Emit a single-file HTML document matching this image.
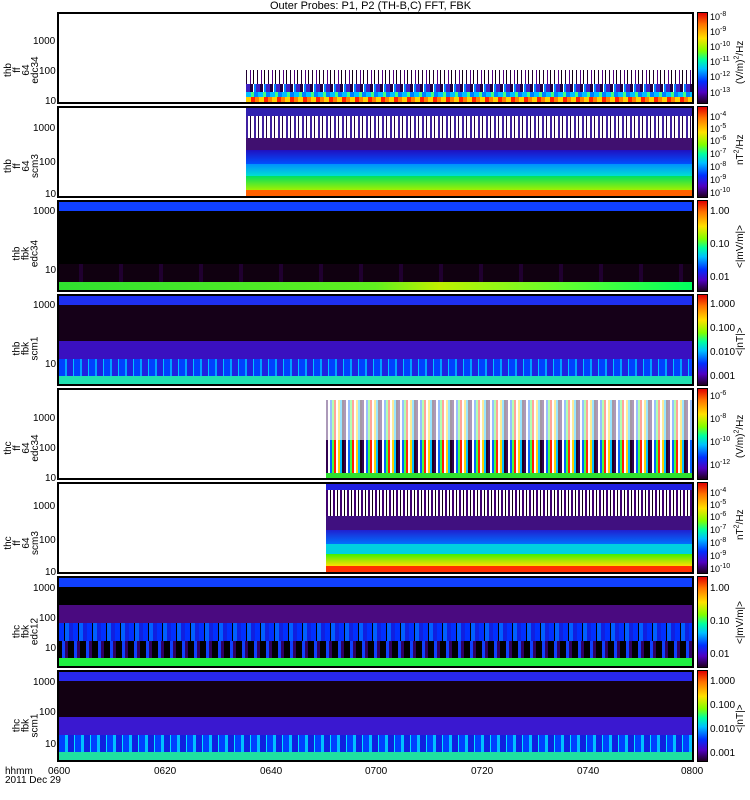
<!DOCTYPE html><html><head><style>
body{margin:0;width:750px;height:800px;background:#fff;position:relative;overflow:hidden;font-family:"Liberation Sans",sans-serif;}
.p{position:absolute;left:57px;width:633px;border:2px solid #000;box-sizing:content-box;overflow:hidden;background:#fff}
.d{position:absolute;top:0;bottom:0;right:0}
.s{position:absolute;left:0;right:0}
.cb{position:absolute;left:697px;width:9px;border:1px solid #000;background:linear-gradient(#e00000,#ff7000 12%,#ffe000 28%,#80ff00 42%,#00ffa0 52%,#00c0ff 62%,#0030ff 76%,#5000c0 88%,#200020)}
.t{position:absolute;font-size:10px;line-height:10px;color:#000;white-space:nowrap}
.e{position:absolute;font-size:9px;line-height:9px;white-space:nowrap;left:710px}
.e sup{font-size:7px;line-height:0;vertical-align:4px}
.yl{position:absolute;font-size:10px;line-height:9px;text-align:center;transform:rotate(-90deg);transform-origin:center;width:60px}
.v{position:absolute;font-size:10px;white-space:nowrap;transform:rotate(-90deg);transform-origin:left top}
.v sup{font-size:7px;line-height:0}
</style></head><body>
<div class="t" style="left:270px;top:1px;font-size:11px">Outer Probes: P1, P2 (TH-B,C) FFT, FBK</div>

<!-- P1 -->
<div class="p" style="top:12px;height:88px">
 <div class="d" style="left:187px">
  <div class="s" style="top:56px;height:20px;background:repeating-linear-gradient(90deg,#200030 0 1px,#fff 1px 4px,#500080 4px 5px,#fff 5px 7px,#100010 7px 8px,#fff 8px 11px)"></div>
  <div class="s" style="top:70px;height:8px;background:repeating-linear-gradient(90deg,#4020c0 0 4px,#200040 4px 7px,#fff 7px 8px,#0080ff 8px 10px)"></div>
  <div class="s" style="top:78px;height:5px;background:repeating-linear-gradient(90deg,#00c0ff 0 5px,#40ff80 5px 8px,#0080ff 8px 12px)"></div>
  <div class="s" style="top:83px;height:5px;background:repeating-linear-gradient(90deg,#ffd000 0 5px,#ff2000 5px 9px,#ff8000 9px 13px)"></div>
 </div>
</div>
<!-- P2 -->
<div class="p" style="top:106px;height:88px">
 <div class="d" style="left:187px">
  <div class="s" style="top:0;height:8px;background:#3020b0"></div>
  <div class="s" style="top:8px;height:22px;background:repeating-linear-gradient(90deg,#4020a0 0 2px,#fff 2px 4px,#200040 4px 5px,#fff 5px 6px,#fff 6px 8px)"></div>
  <div class="s" style="top:30px;height:12px;background:#401070"></div>
  <div class="s" style="top:42px;height:14px;background:linear-gradient(#2010c0,#0050ff)"></div>
  <div class="s" style="top:56px;height:12px;background:linear-gradient(#0090ff,#00e0d0)"></div>
  <div class="s" style="top:68px;height:14px;background:linear-gradient(#00e060,#a0f000)"></div>
  <div class="s" style="top:82px;height:6px;background:#ff6000"></div>
 </div>
</div>
<!-- P3 -->
<div class="p" style="top:200px;height:88px;background:#000">
 <div class="s" style="top:0;height:9px;background:#1040ff"></div>
 <div class="s" style="top:62px;height:18px;background:repeating-linear-gradient(90deg,#100010 0 20px,#200030 20px 24px,#100010 24px 40px)"></div>
 <div class="s" style="top:80px;height:8px;background:linear-gradient(90deg,#30e030,#60f020 50%,#c0f000 60%,#60ff30 80%,#00ff60)"></div>
</div>
<!-- P4 -->
<div class="p" style="top:294px;height:88px;background:#150018">
 <div class="s" style="top:0;height:9px;background:#1e30f0"></div>
 <div class="s" style="top:45px;height:18px;background:#3a10c0"></div>
 <div class="s" style="top:63px;height:17px;background:repeating-linear-gradient(90deg,#0040ff 0 6px,#00a0ff 6px 8px,#2020e0 8px 14px,#00c0ff 14px 15px)"></div>
 <div class="s" style="top:80px;height:8px;background:#20e0b0"></div>
</div>
<!-- P5 -->
<div class="p" style="top:388px;height:88px">
 <div class="d" style="left:267px;top:10px;background:repeating-linear-gradient(90deg,#300050 0 2px,#fff 2px 4px,#0060ff 4px 6px,#40ff40 6px 8px,#ff2000 8px 10px,#fff 10px 12px,#ffd000 12px 14px,#00c0ff 14px 16px,#200020 16px 18px)"></div>
 <div class="d" style="left:267px;top:10px;height:40px;background:rgba(255,255,255,.6)"></div>
 <div class="d" style="left:267px;top:83px;background:#30e030"></div>
</div>
<!-- P6 -->
<div class="p" style="top:482px;height:88px">
 <div class="d" style="left:267px">
  <div class="s" style="top:0;height:6px;background:#2020e0"></div>
  <div class="s" style="top:6px;height:26px;background:repeating-linear-gradient(90deg,#400070 0 2px,#fff 2px 4px,#100010 4px 5px,#fff 5px 7px)"></div>
  <div class="s" style="top:32px;height:14px;background:#401080"></div>
  <div class="s" style="top:46px;height:14px;background:linear-gradient(#2020d0,#0070ff)"></div>
  <div class="s" style="top:60px;height:10px;background:#00d0e0"></div>
  <div class="s" style="top:70px;height:12px;background:linear-gradient(#40f000,#ffe000)"></div>
  <div class="s" style="top:82px;height:6px;background:#ff3000"></div>
 </div>
</div>
<!-- P7 -->
<div class="p" style="top:576px;height:88px;background:#000">
 <div class="s" style="top:0;height:9px;background:#1040ff"></div>
 <div class="s" style="top:27px;height:18px;background:#4a0a80"></div>
 <div class="s" style="top:45px;height:18px;background:repeating-linear-gradient(90deg,#0030ff 0 5px,#000 5px 6px,#0060ff 6px 10px,#1020e0 10px 14px)"></div>
 <div class="s" style="top:63px;height:17px;background:repeating-linear-gradient(90deg,#000 0 3px,#1040ff 3px 6px,#300060 6px 9px,#000 9px 12px)"></div>
 <div class="s" style="top:80px;height:8px;background:#20f040"></div>
</div>
<!-- P8 -->
<div class="p" style="top:670px;height:88px;background:#120012">
 <div class="s" style="top:0;height:9px;background:#2828ee"></div>
 <div class="s" style="top:45px;height:18px;background:#3a18d0"></div>
 <div class="s" style="top:63px;height:17px;background:repeating-linear-gradient(90deg,#0040ff 0 6px,#00c0ff 6px 9px,#1020e0 9px 15px,#00e0ff 15px 16px)"></div>
 <div class="s" style="top:80px;height:8px;background:#20e0a0"></div>
</div>

<!-- colorbars -->
<div class="cb" style="top:12px;height:90px"></div>
<div class="cb" style="top:106px;height:90px"></div>
<div class="cb" style="top:200px;height:90px"></div>
<div class="cb" style="top:294px;height:90px"></div>
<div class="cb" style="top:388px;height:90px"></div>
<div class="cb" style="top:482px;height:90px"></div>
<div class="cb" style="top:576px;height:90px"></div>
<div class="cb" style="top:670px;height:90px"></div>

<!-- colorbar labels -->
<div class="e" style="top:13px">10<sup>-8</sup></div><div class="e" style="top:28px">10<sup>-9</sup></div><div class="e" style="top:43px">10<sup>-10</sup></div><div class="e" style="top:58px">10<sup>-11</sup></div><div class="e" style="top:73px">10<sup>-12</sup></div><div class="e" style="top:89px">10<sup>-13</sup></div>
<div class="e" style="top:113px">10<sup>-4</sup></div><div class="e" style="top:125px">10<sup>-5</sup></div><div class="e" style="top:137px">10<sup>-6</sup></div><div class="e" style="top:150px">10<sup>-7</sup></div><div class="e" style="top:163px">10<sup>-8</sup></div><div class="e" style="top:176px">10<sup>-9</sup></div><div class="e" style="top:189px">10<sup>-10</sup></div>
<div class="e" style="top:207px;font-size:10px">1.00</div><div class="e" style="top:240px;font-size:10px">0.10</div><div class="e" style="top:273px;font-size:10px">0.01</div>
<div class="e" style="top:300px;font-size:10px">1.000</div><div class="e" style="top:324px;font-size:10px">0.100</div><div class="e" style="top:348px;font-size:10px">0.010</div><div class="e" style="top:372px;font-size:10px">0.001</div>
<div class="e" style="top:392px">10<sup>-6</sup></div><div class="e" style="top:415px">10<sup>-8</sup></div><div class="e" style="top:438px">10<sup>-10</sup></div><div class="e" style="top:461px">10<sup>-12</sup></div>
<div class="e" style="top:489px">10<sup>-4</sup></div><div class="e" style="top:501px">10<sup>-5</sup></div><div class="e" style="top:513px">10<sup>-6</sup></div><div class="e" style="top:526px">10<sup>-7</sup></div><div class="e" style="top:539px">10<sup>-8</sup></div><div class="e" style="top:552px">10<sup>-9</sup></div><div class="e" style="top:565px">10<sup>-10</sup></div>
<div class="e" style="top:584px;font-size:10px">1.00</div><div class="e" style="top:617px;font-size:10px">0.10</div><div class="e" style="top:650px;font-size:10px">0.01</div>
<div class="e" style="top:677px;font-size:10px">1.000</div><div class="e" style="top:701px;font-size:10px">0.100</div><div class="e" style="top:725px;font-size:10px">0.010</div><div class="e" style="top:749px;font-size:10px">0.001</div>
<div class="v" style="left:735px;top:84px">(V/m)<sup>2</sup>/Hz</div>
<div class="v" style="left:735px;top:165px">nT<sup>2</sup>/Hz</div>
<div class="v" style="left:735px;top:268px">&lt;|mV/m|&gt;</div>
<div class="v" style="left:735px;top:356px">&lt;|nT|&gt;</div>
<div class="v" style="left:735px;top:458px">(V/m)<sup>2</sup>/Hz</div>
<div class="v" style="left:735px;top:540px">nT<sup>2</sup>/Hz</div>
<div class="v" style="left:735px;top:644px">&lt;|mV/m|&gt;</div>
<div class="v" style="left:735px;top:733px">&lt;|nT|&gt;</div>

<!-- y tick labels -->
<div class="t" style="left:33px;top:37px">1000</div><div class="t" style="left:39px;top:67px">100</div><div class="t" style="left:45px;top:97px">10</div>
<div class="t" style="left:33px;top:124px">1000</div><div class="t" style="left:39px;top:158px">100</div><div class="t" style="left:45px;top:190px">10</div>
<div class="t" style="left:33px;top:207px">1000</div><div class="t" style="left:45px;top:266px">10</div>
<div class="t" style="left:33px;top:301px">1000</div><div class="t" style="left:45px;top:360px">10</div>
<div class="t" style="left:33px;top:414px">1000</div><div class="t" style="left:39px;top:444px">100</div><div class="t" style="left:45px;top:474px">10</div>
<div class="t" style="left:33px;top:502px">1000</div><div class="t" style="left:39px;top:536px">100</div><div class="t" style="left:45px;top:568px">10</div>
<div class="t" style="left:33px;top:584px">1000</div><div class="t" style="left:39px;top:614px">100</div><div class="t" style="left:45px;top:644px">10</div>
<div class="t" style="left:33px;top:678px">1000</div><div class="t" style="left:39px;top:708px">100</div><div class="t" style="left:45px;top:740px">10</div>

<!-- panel names -->
<div class="yl" style="left:-8px;top:52px">thb<br>ff<br>64<br>edc34</div>
<div class="yl" style="left:-8px;top:148px">thb<br>ff<br>64<br>scm3</div>
<div class="yl" style="left:-4px;top:240px">thb<br>fbk<br>edc34</div>
<div class="yl" style="left:-4px;top:335px">thb<br>fbk<br>scm1</div>
<div class="yl" style="left:-8px;top:430px">thc<br>ff<br>64<br>edc34</div>
<div class="yl" style="left:-8px;top:525px">thc<br>ff<br>64<br>scm3</div>
<div class="yl" style="left:-4px;top:618px">thc<br>fbk<br>edc12</div>
<div class="yl" style="left:-4px;top:712px">thc<br>fbk<br>scm1</div>

<!-- x axis -->
<div class="t" style="left:5px;top:767px;line-height:9px">hhmm<br>2011 Dec 29</div>
<div class="t" style="left:48px;top:767px">0600</div>
<div class="t" style="left:154px;top:767px">0620</div>
<div class="t" style="left:260px;top:767px">0640</div>
<div class="t" style="left:365px;top:767px">0700</div>
<div class="t" style="left:471px;top:767px">0720</div>
<div class="t" style="left:577px;top:767px">0740</div>
<div class="t" style="left:681px;top:767px">0800</div>
</body></html>
